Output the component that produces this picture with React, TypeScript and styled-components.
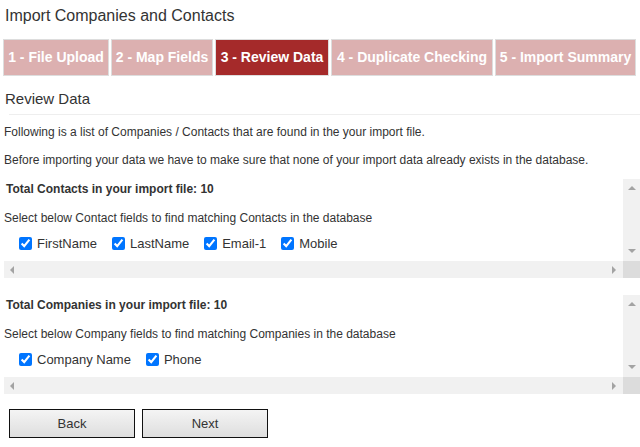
import React from 'react';
import styled, { createGlobalStyle } from 'styled-components';

const GlobalStyle = createGlobalStyle`
  html, body {
    margin: 0;
    padding: 0;
    background: #fff;
  }
  body {
    font-family: "Liberation Sans", Arial, sans-serif;
    color: #333;
  }
`;

const Page = styled.div`
  width: 640px;
  height: 447px;
  overflow: hidden;
`;

const Title = styled.h1`
  margin: 0;
  padding: 6px 5px 0;
  font-size: 16px;
  line-height: 20px;
  font-weight: normal;
  color: #333;
`;

const Steps = styled.div`
  display: flex;
  gap: 2px;
  margin-top: 13px;
  padding-left: 3px;
`;

const Step = styled.div<{ $active?: boolean; $w: number }>`
  box-sizing: border-box;
  width: ${(p) => p.$w}px;
  height: 37px;
  line-height: 35px;
  border: 1px solid #ddd;
  background: ${(p) => (p.$active ? '#a52a2a' : '#dcb0b0')};
  color: #fff;
  font-size: 14px;
  font-weight: bold;
  text-align: center;
  white-space: nowrap;
`;

const SectionTitle = styled.h2`
  margin: 13px 0 0;
  padding-left: 5px;
  font-size: 15px;
  line-height: 20px;
  font-weight: normal;
  color: #333;
`;

const Rule = styled.div`
  margin: 5px 0 0 9px;
  border-top: 1px solid #eee;
`;

const Intro = styled.p<{ $top: number }>`
  margin: ${(p) => p.$top}px 0 0;
  padding-left: 4px;
  font-size: 12px;
  line-height: 16px;
  color: #333;
`;

const ScrollFrame = styled.div<{ $top: number }>`
  display: grid;
  grid-template-columns: 1fr 17px;
  grid-template-rows: 82px 17px;
  margin: ${(p) => p.$top}px 0 0 4px;
`;

const FrameBody = styled.div`
  overflow: hidden;
  background: #fff;
`;

const Count = styled.div`
  margin-top: 2px;
  padding-left: 2px;
  font-size: 12px;
  line-height: 16px;
  font-weight: bold;
  color: #333;
`;

const Hint = styled.div`
  margin-top: 13px;
  font-size: 12px;
  line-height: 16px;
  color: #333;
`;

const FieldRow = styled.div`
  display: flex;
  align-items: center;
  gap: 15px;
  height: 18px;
  margin-top: 8px;
  padding-left: 15px;
`;

const Field = styled.label`
  display: inline-flex;
  align-items: center;
  gap: 5px;
  font-size: 13px;
  color: #333;
  white-space: nowrap;
`;

const Check = styled.input`
  width: 13px;
  height: 13px;
  margin: 1px 0 0;
`;

const VBar = styled.div`
  display: flex;
  flex-direction: column;
  justify-content: space-between;
  align-items: center;
  padding: 7px 0 8px;
  background: #f1f1f1;
`;

const HBar = styled.div`
  display: flex;
  justify-content: space-between;
  align-items: center;
  padding: 0 7px 0 6px;
  background: #f1f1f1;
`;

const Corner = styled.div`
  background: #dcdcdc;
`;

const Arrow = styled.span<{ $dir: 'up' | 'down' | 'left' | 'right' }>`
  width: 0;
  height: 0;
  border: 4px solid transparent;
  ${(p) =>
    p.$dir === 'up'
      ? 'border-bottom-color: #a3a3a3; border-top-width: 0;'
      : p.$dir === 'down'
      ? 'border-top-color: #a3a3a3; border-bottom-width: 0;'
      : p.$dir === 'left'
      ? 'border-right-color: #a3a3a3; border-left-width: 0;'
      : 'border-left-color: #a3a3a3; border-right-width: 0;'}
`;

const Actions = styled.div`
  display: flex;
  gap: 7px;
  margin-top: 15px;
  padding-left: 9px;
`;

const Button = styled.button`
  box-sizing: border-box;
  width: 126px;
  height: 29px;
  border: 1px solid #111;
  border-radius: 0;
  background: linear-gradient(#f4f4f4, #dedede);
  font-family: "Liberation Sans", Arial, sans-serif;
  font-size: 13px;
  color: #333;
  cursor: pointer;
`;

const steps = [
  { label: '1 - File Upload', w: 106 },
  { label: '2 - Map Fields', w: 102 },
  { label: '3 - Review Data', w: 114 },
  { label: '4 - Duplicate Checking', w: 162 },
  { label: '5 - Import Summary', w: 141 },
];

type BoxProps = {
  top: number;
  count: string;
  hint: string;
  fields: string[];
};

const FieldBox = ({ top, count, hint, fields }: BoxProps) => (
  <ScrollFrame $top={top}>
    <FrameBody>
      <Count>{count}</Count>
      <Hint>{hint}</Hint>
      <FieldRow>
        {fields.map((f) => (
          <Field key={f}>
            <Check type="checkbox" defaultChecked />
            {f}
          </Field>
        ))}
      </FieldRow>
    </FrameBody>
    <VBar>
      <Arrow $dir="up" />
      <Arrow $dir="down" />
    </VBar>
    <HBar>
      <Arrow $dir="left" />
      <Arrow $dir="right" />
    </HBar>
    <Corner />
  </ScrollFrame>
);

const App = () => (
  <Page>
    <GlobalStyle />
    <Title>Import Companies and Contacts</Title>
    <Steps>
      {steps.map((s, i) => (
        <Step key={s.label} $w={s.w} $active={i === 2}>
          {s.label}
        </Step>
      ))}
    </Steps>
    <SectionTitle>Review Data</SectionTitle>
    <Rule />
    <Intro $top={9}>Following is a list of Companies / Contacts that are found in the your import file.</Intro>
    <Intro $top={12}>
      Before importing your data we have to make sure that none of your import data already exists in the database.
    </Intro>
    <FieldBox
      top={11}
      count="Total Contacts in your import file: 10"
      hint="Select below Contact fields to find matching Contacts in the database"
      fields={['FirstName', 'LastName', 'Email-1', 'Mobile']}
    />
    <FieldBox
      top={17}
      count="Total Companies in your import file: 10"
      hint="Select below Company fields to find matching Companies in the database"
      fields={['Company Name', 'Phone']}
    />
    <Actions>
      <Button type="button">Back</Button>
      <Button type="button">Next</Button>
    </Actions>
  </Page>
);

export default App;
